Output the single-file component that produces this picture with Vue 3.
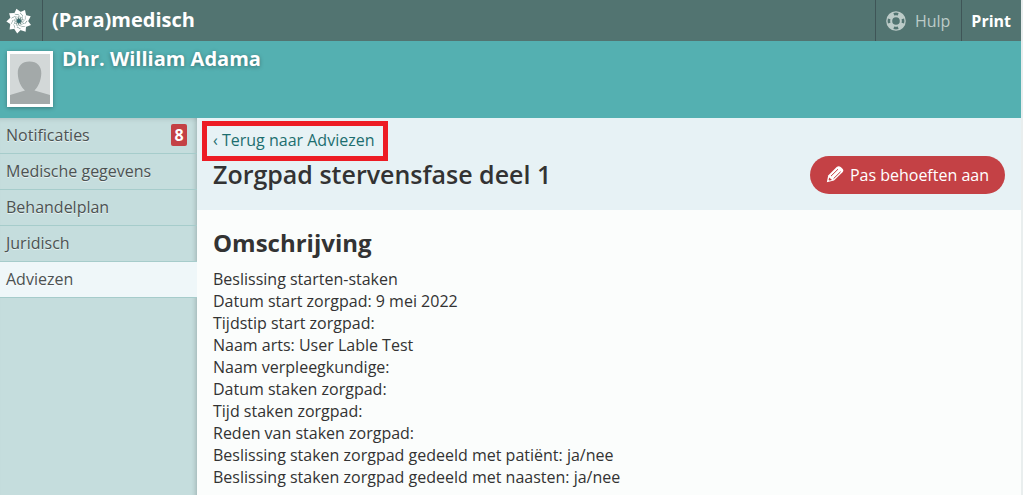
<script setup>
const menu = [
  { label: 'Notificaties', count: 8 },
  { label: 'Medische gegevens' },
  { label: 'Behandelplan' },
  { label: 'Juridisch' },
  { label: 'Adviezen', active: true },
]

const lines = [
  'Beslissing starten-staken',
  'Datum start zorgpad: 9 mei 2022',
  'Tijdstip start zorgpad:',
  'Naam arts: User Lable Test',
  'Naam verpleegkundige:',
  'Datum staken zorgpad:',
  'Tijd staken zorgpad:',
  'Reden van staken zorgpad:',
  'Beslissing staken zorgpad gedeeld met patiënt: ja/nee',
  'Beslissing staken zorgpad gedeeld met naasten: ja/nee',
]

const petals = Array.from({ length: 9 }, (_, i) => i * 40 - 14)
</script>

<template>
  <div class="page">
    <header class="topbar">
      <a class="logo" href="#" aria-label="Home">
        <svg viewBox="-13 -13 26 26" width="26" height="26" aria-hidden="true">
          <g v-for="a in petals" :key="a" :transform="`rotate(${a})`">
            <path d="M0.5 -12.6L4 -8.2L1.8 -6.2L-3 -8.2Z" fill="#fff" />
            <path d="M-3 -7.8L1.4 -5.9L0.2 -4L-3.2 -5.4Z" fill="#fff" />
            <path d="M-2.4 -5L0 -3.8L-0.6 -2L-2.2 -3Z" fill="#e4ecea" />
          </g>
          <circle r="1.8" fill="#2d6a72" />
        </svg>
      </a>
      <h1 class="app-title">(Para)medisch</h1>
      <a class="tool help" href="#">
        <svg viewBox="0 0 22 20" width="22" height="20" aria-hidden="true">
          <circle cx="11" cy="10" r="6.8" fill="none" stroke="#bccbc8" stroke-width="6" />
          <g fill="none" stroke="#527471" stroke-width="2.6">
            <path d="M8.8 3.2A7.1 7.1 0 0 1 13.2 3.2M17.8 7.8A7.1 7.1 0 0 1 17.8 12.2M13.2 16.8A7.1 7.1 0 0 1 8.8 16.8M4.2 12.2A7.1 7.1 0 0 1 4.2 7.8" />
          </g>
        </svg>
        <span>Hulp</span>
      </a>
      <a class="tool print" href="#">Print</a>
    </header>

    <section class="patient">
      <div class="avatar">
        <svg viewBox="0 0 40 50" width="40" height="50" role="img" aria-label="Foto">
          <rect width="40" height="50" fill="#d3d8d8" />
          <path d="M19.5 7.5C27 7.5 31.5 12 31.3 19.500C31 27 28 33 24.500 36.500L40 41V50H0V41L15 36.500C11 33 8 27 7.800 19.500C7.500 12 12 7.500 19.500 7.500Z" fill="#a3a9a9" />
        </svg>
      </div>
      <h2 class="patient-name">Dhr. William Adama</h2>
    </section>

    <div class="body">
      <nav class="sidebar">
        <a v-for="m in menu" :key="m.label" href="#" class="item" :class="{ active: m.active }">
          <span>{{ m.label }}</span>
          <span v-if="m.count" class="count">{{ m.count }}</span>
        </a>
      </nav>

      <main class="content">
        <div class="heading">
          <div class="heading-text">
            <a class="back" href="#">‹ Terug naar Adviezen</a>
            <h2 class="title">Zorgpad stervensfase deel 1</h2>
          </div>
          <button class="edit" type="button">
            <svg viewBox="0 0 18 18" width="18" height="18" aria-hidden="true">
              <path d="M2.200 9.500L10.700 1Q12.600 -0.300 14.700 1L16.500 2.800Q18 4.500 16.500 6.300L8 14.600L0.800 16.300Z" fill="#fff" />
              <path d="M5 10.100L12 3.200M7.600 12.600L14.600 5.700" stroke="#c44145" stroke-width="1" fill="none" />
              <path d="M3.200 11.500L6 14L3.400 14.600L2.600 13.900Z" fill="#c44145" />
            </svg>
            <span>Pas behoeften aan</span>
          </button>
        </div>
        <section class="description">
          <h3>Omschrijving</h3>
          <p v-for="l in lines" :key="l">{{ l }}</p>
        </section>
      </main>
    </div>
  </div>
</template>

<style>
body {
  margin: 0;
  background: #fbfdfc;
}
</style>

<style scoped>
.page {
  display: flex;
  flex-direction: column;
  min-height: 100vh;
  box-sizing: border-box;
  border-right: 2px solid #e9eeee;
  font-family: "Open Sans", "Noto Sans", sans-serif;
  font-size: 16px;
  color: #333;
}
h1, h2, h3, p {
  margin: 0;
}
a {
  text-decoration: none;
}
.topbar {
  display: flex;
  height: 41px;
  background: #527471;
  color: #fff;
}
.logo {
  display: flex;
  align-items: center;
  width: 36px;
  padding-left: 6px;
  border-right: 1px solid #3f5557;
}
.app-title {
  flex: 1;
  padding-left: 9px;
  font-size: 20px;
  font-weight: 700;
  line-height: 40px;
}
.tool {
  display: flex;
  align-items: center;
  gap: 8px;
  padding: 0 10px 0 9px;
  border-left: 1px solid #3f5557;
  color: #fff;
}
.help {
  padding-right: 11px;
  color: #bccbc8;
}
.print {
  font-weight: 700;
}
.patient {
  display: flex;
  align-items: flex-start;
  gap: 9px;
  height: 67px;
  padding: 10px 7px 0;
  background: #54b0b1;
}
.avatar {
  display: flex;
  border: 3px solid #fff;
  box-shadow: 0 1px 4px rgba(0, 0, 0, 0.3);
}
.patient-name {
  margin-top: -5px;
  font-size: 20px;
  line-height: 26px;
  font-weight: 700;
  color: #fff;
  text-shadow: 0 1px 4px rgba(0, 0, 0, 0.35);
}
.body {
  display: flex;
  flex: 1;
}
.sidebar {
  width: 197px;
  flex: none;
  background: #c5dddd;
  box-shadow: inset -5px 0 5px -4px rgba(0, 0, 0, 0.2), inset 0 5px 5px -4px rgba(0, 0, 0, 0.12);
}
.item {
  display: flex;
  align-items: center;
  justify-content: space-between;
  box-sizing: border-box;
  height: 36px;
  padding: 0 10px 2px 6px;
  border-bottom: 1px solid #a6cccb;
  color: #4c5252;
  text-shadow: 0 1px 0 rgba(255, 255, 255, 0.6);
}
.active {
  background: #eff7f9;
}
.count {
  width: 16px;
  border-radius: 2px;
  background: #c44145;
  color: #fff;
  font-weight: 700;
  line-height: 22px;
  text-align: center;
  text-shadow: none;
}
.content {
  flex: 1;
  min-width: 0;
  background: #fbfdfc;
}
.heading {
  display: flex;
  justify-content: space-between;
  align-items: flex-end;
  padding: 3px 16px 16px 5px;
  background: #e7f2f5;
}
.heading-text {
  display: flex;
  flex-direction: column;
  align-items: flex-start;
}
.back {
  padding: 0 9px 2px 6px;
  border: 5px solid #ed1c24;
  color: #1d6e6f;
  line-height: 28px;
}
.title {
  padding: 0 0 7px 11px;
  font-size: 25px;
  line-height: 26px;
  font-weight: 600;
}
.edit {
  display: flex;
  align-items: center;
  gap: 6px;
  height: 38px;
  padding: 0 16px;
  border: 0;
  border-radius: 19px;
  background: #c44145;
  color: #fff;
  font: inherit;
}
.description {
  padding: 16px;
}
h3 {
  margin-bottom: 8px;
  font-size: 24px;
  line-height: 34px;
  font-weight: 700;
}
p {
  line-height: 22px;
}
</style>
